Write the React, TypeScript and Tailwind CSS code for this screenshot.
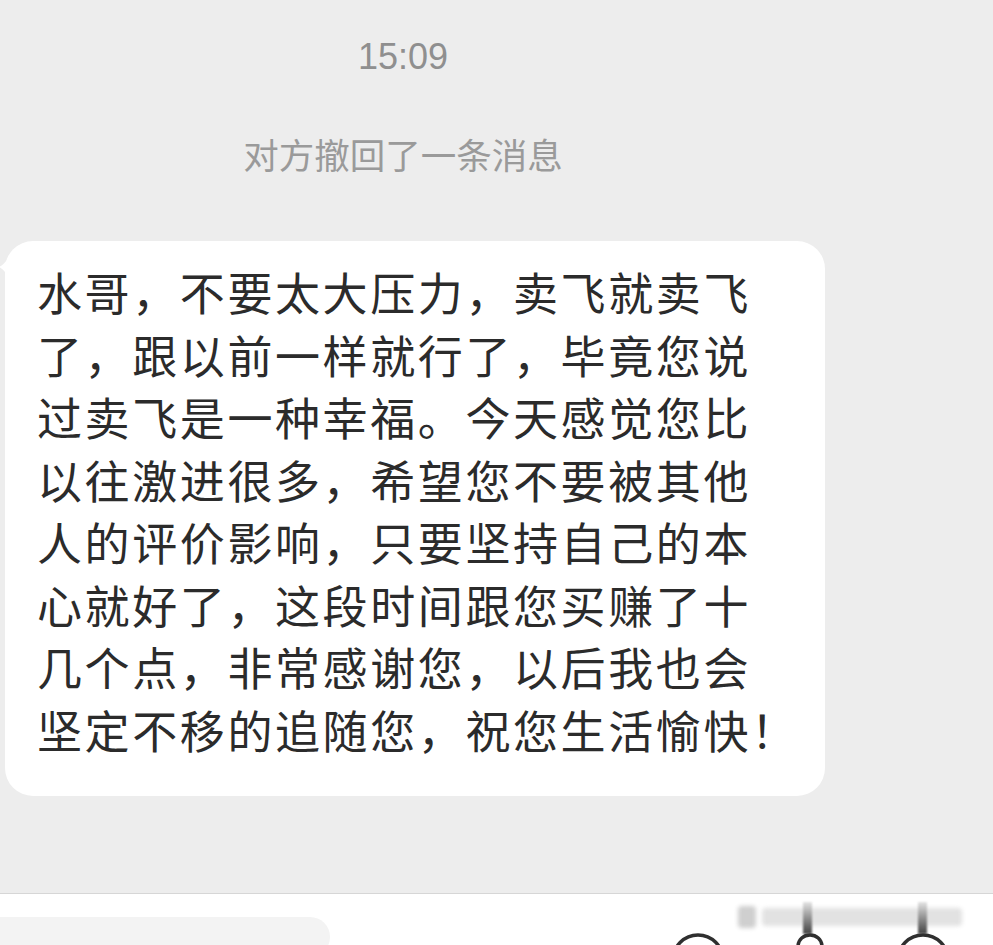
import React from 'react'

const lines = [
  '水哥，不要太大压力，卖飞就卖飞',
  '了，跟以前一样就行了，毕竟您说',
  '过卖飞是一种幸福。今天感觉您比',
  '以往激进很多，希望您不要被其他',
  '人的评价影响，只要坚持自己的本',
  '心就好了，这段时间跟您买赚了十',
  '几个点，非常感谢您，以后我也会',
  '坚定不移的追随您，祝您生活愉快！',
]

const cjk = { fontFamily: '"Noto Sans CJK SC", "Noto Sans", sans-serif' }

export default function App() {
  return (
    <div className="flex h-[945px] w-full flex-col overflow-hidden bg-[#ededed]" style={cjk}>
      {/* centre column of the chat, the shot is cropped on the right */}
      <div className="flex w-[806px] flex-col items-center">
        <div
          className="mt-[39px] h-[36px] text-[36px] leading-[36px] text-[#8f8f8f]"
          style={{ fontFamily: '"Liberation Sans", Arial, sans-serif' }}
        >
          15:09
        </div>
        <div className="mt-[58px] text-[35.5px] leading-[41px] text-[#9a9a9a]">对方撤回了一条消息</div>
      </div>

      <div className="relative ml-[5px] mt-[67px] w-[820px] rounded-[28px] bg-white pb-[35px] pl-[32px] pt-[20px]">
        <svg className="absolute left-[-6px] top-[16px]" width="10" height="24" viewBox="0 0 10 24">
          <path d="M10 0 C6 6 3 9 0 10 C4 12 8 16 10 24 Z" fill="#ffffff" />
        </svg>
        {lines.map((line) => (
          <div key={line} className="whitespace-nowrap text-[45px] leading-[62.5px] tracking-[2.6px] text-[#2b2b2b]">
            {line}
          </div>
        ))}
      </div>

      <div className="flex-1" />

      <div className="relative h-[52px] border-t border-[#d6d6d6] bg-white">
        <div className="absolute left-0 top-[23px] h-[40px] w-[330px] rounded-r-[22px] bg-[#f3f3f3]" />

        {/* blurred watermark */}
        <div className="absolute left-[738px] top-[10px] flex h-[26px] w-[248px] items-center gap-[6px] blur-[2px]">
          <div className="h-[22px] w-[18px] rounded bg-[#cfcfcf]" />
          <div className="h-[18px] w-[200px] rounded bg-[#e2e2e2]" />
        </div>
        <div className="absolute left-[803px] top-[8px] h-[32px] w-[9px] bg-gradient-to-b from-[#e5e5e5] to-[#444444] blur-[1px]" />
        <div className="absolute left-[918px] top-[8px] h-[32px] w-[9px] bg-gradient-to-b from-[#e5e5e5] to-[#444444] blur-[1px]" />

        {/* bottom toolbar icons, cut off */}
        <svg className="absolute left-[670px] top-[38px]" width="56" height="56" viewBox="0 0 56 56">
          <circle cx="28" cy="28" r="25" fill="none" stroke="#2f2f2f" strokeWidth="3.5" />
        </svg>
        <svg className="absolute left-[795px] top-[39px]" width="30" height="40" viewBox="0 0 30 40">
          <path d="M3 40 V14 C3 6 9 2 15 2 C21 2 27 6 27 14 V40" fill="none" stroke="#2f2f2f" strokeWidth="3.5" />
        </svg>
        <svg className="absolute left-[895px] top-[38px]" width="56" height="56" viewBox="0 0 56 56">
          <circle cx="28" cy="28" r="25" fill="none" stroke="#2f2f2f" strokeWidth="3.5" />
        </svg>
      </div>
    </div>
  )
}
